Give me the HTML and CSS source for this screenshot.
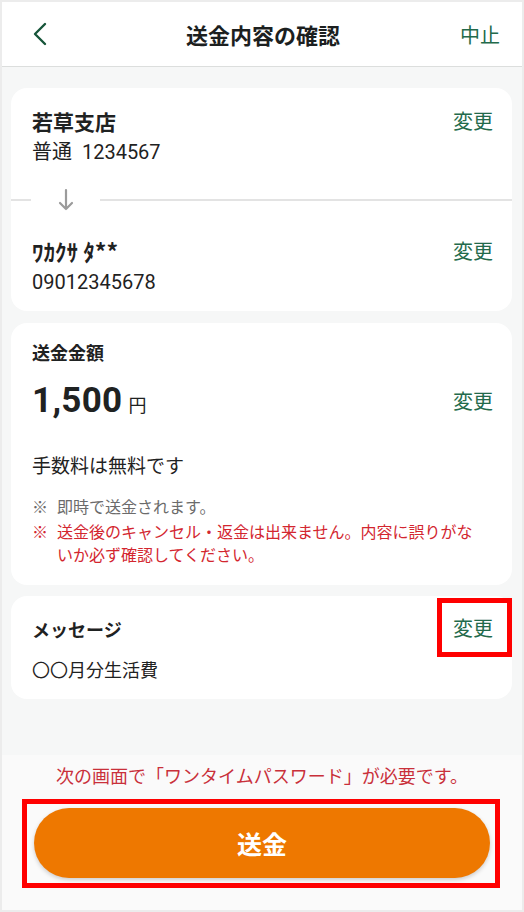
FILE: index.html
```html
<!DOCTYPE html>
<html lang="ja">
<head>
<meta charset="utf-8">
<title>送金内容の確認</title>
<link rel="stylesheet" href="styles.css">
</head>
<body>
<div class="frame">
  <header class="header">
    <span class="back">
      <svg width="16" height="24" viewBox="0 0 16 24"><path d="M13 2 L3 12 L13 22" fill="none" stroke="#17553a" stroke-width="2.4" stroke-linecap="round" stroke-linejoin="round"/></svg>
    </span>
    <h1 class="title">送金内容の確認</h1>
    <span class="cancel">中止</span>
  </header>

  <main class="main">
    <section class="card card-route">
      <div class="row">
        <div>
          <div class="name">若草支店</div>
          <div class="sub">普通&nbsp;&nbsp;1234567</div>
        </div>
        <span class="edit">変更</span>
      </div>
      <div class="divider">
        <span class="line short"></span>
        <span class="arrow">
          <svg width="16" height="24" viewBox="0 0 16 24"><path d="M8 2 V21 M2 15 L8 21 L14 15" fill="none" stroke="#9b9b9b" stroke-width="2.2" stroke-linecap="round" stroke-linejoin="round"/></svg>
        </span>
        <span class="line"></span>
      </div>
      <div class="row row-to">
        <div>
          <div class="name kana">ﾜｶｸｻ ﾀ**</div>
          <div class="sub">09012345678</div>
        </div>
        <span class="edit">変更</span>
      </div>
    </section>

    <section class="card card-amount">
      <div class="label">送金金額</div>
      <div class="row amount-row">
        <div class="amount"><span class="num">1,500</span><span class="yen">円</span></div>
        <span class="edit">変更</span>
      </div>
      <div class="fee">手数料は無料です</div>
      <ul class="notes">
        <li class="note"><span class="mark">※</span><span>即時で送金されます。</span></li>
        <li class="note warn"><span class="mark">※</span><span>送金後のキャンセル・返金は出来ません。内容に誤りがないか必ず確認してください。</span></li>
      </ul>
    </section>

    <section class="card card-msg">
      <div class="row">
        <div class="label">メッセージ</div>
        <span class="edit boxed">変更</span>
      </div>
      <div class="msg">〇〇月分生活費</div>
    </section>
  </main>

  <footer class="footer">
    <p class="otp">次の画面で「ワンタイムパスワード」が必要です。</p>
    <div class="btn-wrap">
      <button class="send">送金</button>
    </div>
  </footer>
</div>
</body>
</html>
```

FILE: styles.css
```css
* { box-sizing: border-box; }
html, body { margin: 0; padding: 0; }
body {
  width: 524px;
  height: 912px;
  font-family: Roboto, "Noto Sans CJK JP", sans-serif;
  color: #1f2222;
  background: #ececec;
}
.frame {
  width: 524px;
  height: 912px;
  border: 2px solid #ececec;
  background: #f6f7f7;
  display: flex;
  flex-direction: column;
  overflow: hidden;
}
.header {
  height: 65px;
  background: #fff;
  border-bottom: 1px solid #dcdedd;
  display: flex;
  align-items: center;
  padding: 0 22px 0 30px;
  flex-shrink: 0;
}
.back { width: 40px; display: flex; align-items: center; margin-top: -1px; }
.title {
  flex: 1;
  margin: 0;
  text-align: center;
  font-size: 22px;
  font-weight: 700;
  font-family: "Noto Sans CJK JP", sans-serif;
  color: #1c1f1f;
  padding-right: 2px;
}
.cancel {
  width: 44px;
  text-align: right;
  font-size: 20px;
  color: #236a4b;
  font-family: "Noto Sans CJK JP", sans-serif;
}
.main {
  padding: 21px 10px 0 9px;
  display: flex;
  flex-direction: column;
  gap: 12px;
}
.card {
  background: #fff;
  border-radius: 16px;
  padding: 0 19px 0 21px;
}
.row {
  display: flex;
  justify-content: space-between;
  align-items: flex-start;
}
.edit {
  font-family: "Noto Sans CJK JP", sans-serif;
  font-size: 20px;
  color: #236a4b;
  line-height: 28px;
}
.card-route { padding-top: 18px; padding-bottom: 14px; }
.card-route .edit { margin-top: 1px; }
.name {
  font-family: "Noto Sans CJK JP", sans-serif;
  font-weight: 700;
  font-size: 21px;
  line-height: 30px;
}
.kana { font-size: 23px; }
.sub {
  margin-top: 1px;
  font-size: 20px;
  line-height: 30px;
  color: #1f2222;
}
.divider {
  display: flex;
  align-items: center;
  margin: 21px -19px 0 -21px;
  height: 24px;
}
.line { height: 2px; background: #e3e3e3; flex: 1; }
.line.short { flex: 0 0 20px; }
.arrow { width: 69px; display: flex; justify-content: center; }
.row-to { margin-top: 24px; }

.card-amount { padding-top: 16px; padding-bottom: 19px; }
.label {
  font-family: "Noto Sans CJK JP", sans-serif;
  font-weight: 700;
  font-size: 18px;
  line-height: 26px;
}
.amount-row { align-items: center; margin-top: 14px; }
.amount { display: flex; align-items: baseline; }
.num { font-size: 35px; font-weight: 700; line-height: 44px; letter-spacing: 0.3px; }
.yen { font-family: "Noto Sans CJK JP", sans-serif; font-size: 18px; margin-left: 6px; }
.fee {
  margin-top: 28px;
  font-family: "Noto Sans CJK JP", sans-serif;
  font-size: 19px;
  line-height: 28px;
}
.notes { list-style: none; margin: 16px 0 0; padding: 0 10px 0 0; }
.note {
  display: flex;
  font-family: "Noto Sans CJK JP", sans-serif;
  font-size: 16px;
  line-height: 23px;
  color: #6b6b6b;
}
.note .mark { flex: 0 0 25px; }
.note.warn { color: #d3262f; margin-top: 2px; }

.card-msg { padding-top: 18px; padding-bottom: 16px; margin-top: -1px; }
.card-msg .label { line-height: 28px; margin-top: 1px; }
.msg {
  margin-top: 12px;
  font-family: "Noto Sans CJK JP", sans-serif;
  font-size: 18px;
  line-height: 28px;
}
.boxed { position: relative; }
.boxed::after {
  content: "";
  position: absolute;
  left: -16px;
  right: -19px;
  top: -16px;
  bottom: -15px;
  border: 5px solid #ff0000;
}

.footer {
  margin-top: auto;
  background: #fafafa;
  padding: 7px 0 22px;
  display: flex;
  flex-direction: column;
  align-items: center;
}
.otp {
  margin: 0;
  font-family: "Noto Sans CJK JP", sans-serif;
  font-size: 18px;
  line-height: 26px;
  color: #c9303a;
}
.btn-wrap {
  margin-top: 11px;
  width: 478px;
  margin-left: -2px;
  border: 5px solid #ff0000;
  padding: 4px 5px 5px 7px;
}
.send {
  display: block;
  width: 456px;
  height: 70px;
  border: none;
  border-radius: 35px;
  background: #ee7800;
  color: #fff;
  font-family: "Noto Sans CJK JP", sans-serif;
  font-weight: 700;
  font-size: 25px;
  box-shadow: 0 2px 4px rgba(0,0,0,0.18);
}
```
